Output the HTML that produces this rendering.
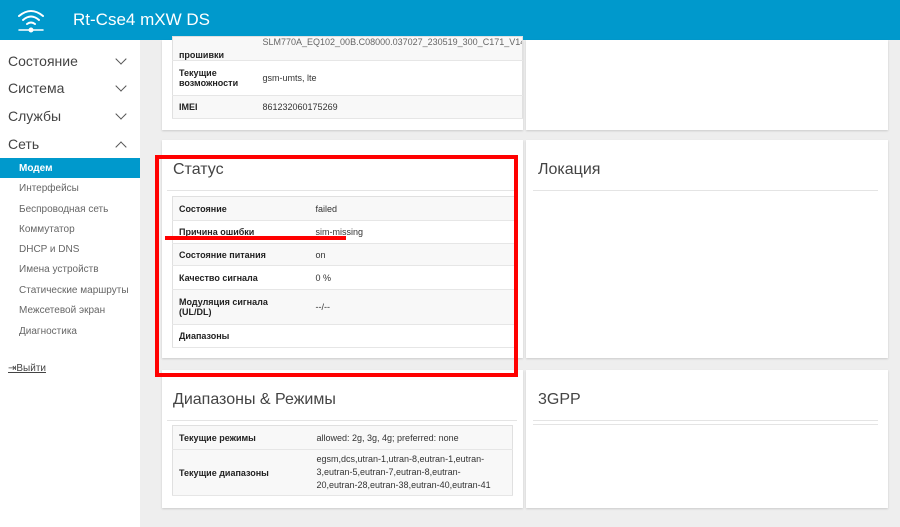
<!DOCTYPE html>
<html><head><meta charset="utf-8"><style>
*{margin:0;padding:0;box-sizing:border-box}
body{width:900px;height:527px;overflow:hidden;background:#eeeeee;font-family:"Liberation Sans","DejaVu Sans",sans-serif;position:relative;color:#333}
.abs{position:absolute}
#hdr{left:0;top:0;width:900px;height:40px;background:#0099cc}
#hdr .t{left:73px;top:10px;color:#fff;font-size:17px}
#side{left:0;top:40px;width:140px;height:487px;background:#fff}
.m{position:absolute;left:8px;font-size:14px;color:#444}
.chev{position:absolute;left:117px;width:8px;height:8px;border-right:1.3px solid #555;border-bottom:1.3px solid #555;transform:rotate(45deg)}
.s{position:absolute;left:19px;font-size:10px;color:#666}
.card{position:absolute;background:#fff;box-shadow:0 1px 2px rgba(0,0,0,.15)}
.h{position:absolute;font-size:16px;color:#444}
.ln{position:absolute;height:1px;background:#e4e4e4}
table{position:absolute;border-collapse:collapse;font-size:9px;table-layout:fixed}
td{border-bottom:1px solid #e6e6e6;padding:0 6px;vertical-align:middle;overflow:hidden}
td.k{font-weight:bold;color:#222}
tr:nth-child(odd) td{background:#f8f8f8}
.tb{border:1px solid #e0e0e0}
</style></head><body>
<div id="hdr" class="abs">
<svg class="abs" style="left:16px;top:8px" width="30" height="26" viewBox="0 0 30 26" fill="none" stroke="#fff" stroke-width="2" stroke-linecap="round">
<path d="M3 8 Q15 -2 27 8"/><path d="M7 12 Q15 5 23 12"/><path d="M11 16 Q15 13 19 16"/><path d="M3 22 H27" stroke-width="1.5"/><circle cx="15" cy="22" r="1.5" fill="#fff"/>
</svg>
<div class="abs t">Rt-Cse4 mXW DS</div>
</div>
<div id="side" class="abs">
<div class="m" style="top:13px">Состояние</div><div class="chev" style="top:15px"></div>
<div class="m" style="top:40px">Система</div><div class="chev" style="top:42px"></div>
<div class="m" style="top:68px">Службы</div><div class="chev" style="top:70px"></div>
<div class="m" style="top:96px">Сеть</div><div class="chev" style="top:103px;transform:rotate(225deg)"></div>
<div class="abs" style="left:0;top:118px;width:140px;height:20px;background:#0099cc"></div>
<div class="s" style="top:123px;color:#fff;font-weight:bold">Модем</div>
<div class="s" style="top:143px">Интерфейсы</div>
<div class="s" style="top:164px">Беспроводная сеть</div>
<div class="s" style="top:184px">Коммутатор</div>
<div class="s" style="top:204px">DHCP и DNS</div>
<div class="s" style="top:224px">Имена устройств</div>
<div class="s" style="top:245px">Статические маршруты</div>
<div class="s" style="top:265px">Межсетевой экран</div>
<div class="s" style="top:286px">Диагностика</div>
<div class="abs" style="left:8px;top:323px;font-size:10px;color:#444;text-decoration:underline">⇥Выйти</div>
</div>

<div class="card" style="left:162px;top:40px;width:361px;height:90px"></div>
<div class="card" style="left:526px;top:40px;width:362px;height:90px"></div>
<table class="tb" style="left:172px;top:36px;width:351px">
<col style="width:84px"><col>
<tr style="height:24px"><td class="k" style="vertical-align:bottom">прошивки</td><td style="color:#666;vertical-align:top;white-space:nowrap">SLM770A_EQ102_00B.C08000.037027_230519_300_C171_V14</td></tr>
<tr style="height:35px"><td class="k" style="background:#fff">Текущие возможности</td><td style="background:#fff">gsm-umts, lte</td></tr>
<tr style="height:23px"><td class="k">IMEI</td><td>861232060175269</td></tr>
</table>

<div class="card" style="left:162px;top:140px;width:361px;height:218px"></div>
<div class="h" style="left:173px;top:161px">Статус</div>
<div class="ln" style="left:167px;top:190px;width:350px"></div>
<table class="tb" style="left:172px;top:196px;width:345px">
<col style="width:137px"><col>
<tr style="height:24px"><td class="k">Состояние</td><td>failed</td></tr>
<tr style="height:23px"><td class="k">Причина ошибки</td><td>sim-missing</td></tr>
<tr style="height:22px"><td class="k">Состояние питания</td><td>on</td></tr>
<tr style="height:24px"><td class="k">Качество сигнала</td><td>0 %</td></tr>
<tr style="height:35px"><td class="k"><div style="width:100px">Модуляция сигнала (UL/DL)</div></td><td>--/--</td></tr>
<tr style="height:23px"><td class="k">Диапазоны</td><td></td></tr>
</table>
<div class="card" style="left:526px;top:140px;width:362px;height:218px"></div>
<div class="h" style="left:538px;top:161px">Локация</div>
<div class="ln" style="left:533px;top:190px;width:345px"></div>

<div class="card" style="left:162px;top:370px;width:361px;height:138px"></div>
<div class="h" style="left:173px;top:391px">Диапазоны &amp; Режимы</div>
<div class="ln" style="left:167px;top:420px;width:350px"></div>
<table class="tb" style="left:172px;top:425px;width:341px">
<col style="width:138px"><col>
<tr style="height:24px"><td class="k">Текущие режимы</td><td>allowed: 2g, 3g, 4g; preferred: none</td></tr>
<tr style="height:46px"><td class="k" style="background:#f8f8f8">Текущие диапазоны</td><td style="background:#f8f8f8;line-height:13px;padding-right:14px">egsm,dcs,utran-1,utran-8,eutran-1,eutran-3,eutran-5,eutran-7,eutran-8,eutran-20,eutran-28,eutran-38,eutran-40,eutran-41</td></tr>
</table>
<div class="card" style="left:526px;top:370px;width:362px;height:138px"></div>
<div class="h" style="left:538px;top:391px">3GPP</div>
<div class="ln" style="left:533px;top:420px;width:345px"></div>
<div class="ln" style="left:533px;top:424px;width:345px"></div>

<div class="abs" style="left:155px;top:155px;width:363px;height:222px;border:4px solid #f00"></div>
<div class="abs" style="left:165px;top:236px;width:181px;height:4px;background:#f00"></div>
</body></html>
